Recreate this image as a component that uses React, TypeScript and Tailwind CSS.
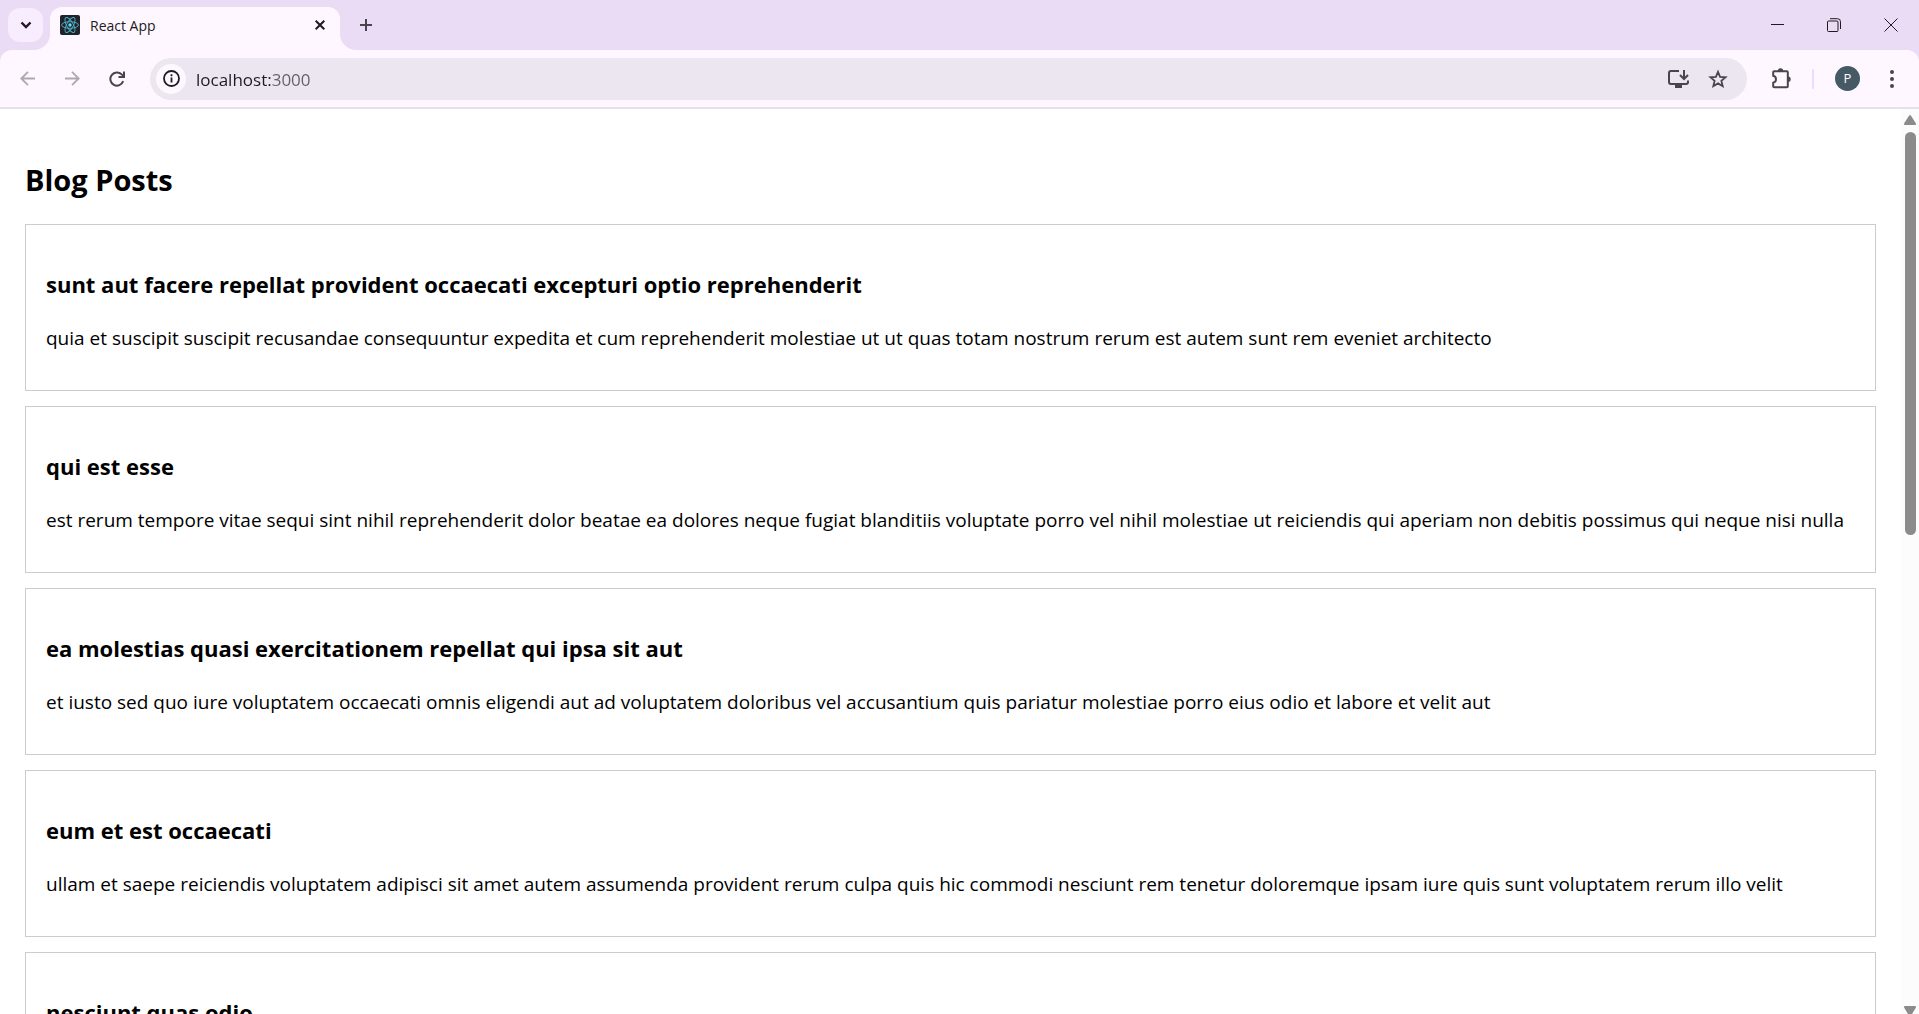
import React from "react";

const CENTERED = "flex shrink-0 items-center justify-center";

const posts: { title: string; body?: string }[] = [
  {
    title: "sunt aut facere repellat provident occaecati excepturi optio reprehenderit",
    body: "quia et suscipit suscipit recusandae consequuntur expedita et cum reprehenderit molestiae ut ut quas totam nostrum rerum est autem sunt rem eveniet architecto",
  },
  {
    title: "qui est esse",
    body: "est rerum tempore vitae sequi sint nihil reprehenderit dolor beatae ea dolores neque fugiat blanditiis voluptate porro vel nihil molestiae ut reiciendis qui aperiam non debitis possimus qui neque nisi nulla",
  },
  {
    title: "ea molestias quasi exercitationem repellat qui ipsa sit aut",
    body: "et iusto sed quo iure voluptatem occaecati omnis eligendi aut ad voluptatem doloribus vel accusantium quis pariatur molestiae porro eius odio et labore et velit aut",
  },
  {
    title: "eum et est occaecati",
    body: "ullam et saepe reiciendis voluptatem adipisci sit amet autem assumenda provident rerum culpa quis hic commodi nesciunt rem tenetur doloremque ipsam iure quis sunt voluptatem rerum illo velit",
  },
  { title: "nesciunt quas odio" },
];

function ReactLogo() {
  return (
    <svg width="20" height="20" viewBox="0 0 20 20" fill="none" aria-hidden="true">
      <rect width="20" height="20" rx="2" fill="#20232a" />
      <g stroke="#4fb3cc" strokeWidth="0.9">
        <ellipse cx="10" cy="10" rx="8.4" ry="3.3" />
        <ellipse cx="10" cy="10" rx="8.4" ry="3.3" transform="rotate(60 10 10)" />
        <ellipse cx="10" cy="10" rx="8.4" ry="3.3" transform="rotate(120 10 10)" />
      </g>
      <circle cx="10" cy="10" r="1.7" fill="#61dafb" />
    </svg>
  );
}

function TabStrip() {
  return (
    <header className="flex h-[50px] shrink-0 items-start bg-[#eadcf5]">
      <button aria-label="Search tabs" className={`${CENTERED} ml-2 mt-2 h-[34px] w-[35px] rounded-xl bg-[#f8ecff]`}>
        <svg width="12" height="8" viewBox="0 0 12 8" fill="none" stroke="#1d1b20" strokeWidth="2.4">
          <path d="M1.500 1.500 6 6l4.500-4.500" />
        </svg>
      </button>
      <div className="relative ml-[7px] mt-[7px] flex h-[43px] w-[290px] items-center rounded-t-xl bg-[#fef7ff] px-[10px] pb-[7px]">
        <svg className="absolute -left-4 bottom-0" width="16" height="16" viewBox="0 0 16 16" fill="#fef7ff">
          <path d="M16 0v16H0A16 16 0 0 0 16 0Z" />
        </svg>
        <svg className="absolute -right-4 bottom-0" width="16" height="16" viewBox="0 0 16 16" fill="#fef7ff">
          <path d="M0 0v16h16A16 16 0 0 1 0 0Z" />
        </svg>
        <ReactLogo />
        <span className="ml-[10px] flex-1 text-[14px] text-[#1d1b20]">React App</span>
        <button aria-label="Close tab" className={`${CENTERED} h-5 w-5`}>
          <svg width="10" height="10" viewBox="0 0 10 10" fill="none" stroke="#1d1b20" strokeWidth="2">
            <path d="m.7.7 8.600 8.600M9.300.7.7 9.300" />
          </svg>
        </button>
      </div>
      <button aria-label="New tab" className={`${CENTERED} ml-3 mt-[11px] h-7 w-7`}>
        <svg width="12" height="12" viewBox="0 0 12 12" fill="none" stroke="#49454f" strokeWidth="2">
          <path d="M6 0v12M0 6h12" />
        </svg>
      </button>
      <div className="ml-auto flex h-[50px] text-[#1d1b20]">
        <button aria-label="Minimize" className={`${CENTERED} w-[57px]`}>
          <svg width="13" height="13" viewBox="0 0 13 13" stroke="currentColor"><path d="M0 5.500h13" /></svg>
        </button>
        <button aria-label="Restore" className={`${CENTERED} w-[56px]`}>
          <svg width="14" height="14" viewBox="0 0 14 14" fill="none" stroke="currentColor">
            <rect x=".5" y="3" width="10.500" height="10.500" rx="1" />
            <path d="M3 .7h7.500a3 3 0 0 1 3 3V11" />
          </svg>
        </button>
        <button aria-label="Close window" className={`${CENTERED} w-[57px]`}>
          <svg width="14" height="14" viewBox="0 0 14 14" stroke="currentColor"><path d="m.5.5 13 13M13.500.5l-13 13" /></svg>
        </button>
      </div>
    </header>
  );
}

function Toolbar() {
  return (
    <div className="shrink-0 bg-[#eadcf5]">
      <nav className="flex h-[59px] items-center rounded-t-xl border-b-2 border-[#e7e0ec] bg-[#fef7ff]">
        <button aria-label="Back" className={`${CENTERED} ml-[11px] h-8 w-8 text-[#aea9b1]`}>
          <svg width="15" height="15" viewBox="0 0 15 15" fill="none" stroke="currentColor" strokeWidth="1.800"><path d="M15 7.500H1.500M8 .8 1.300 7.500 8 14.200" /></svg>
        </button>
        <button aria-label="Forward" className={`${CENTERED} ml-[13px] h-8 w-8 text-[#aea9b1]`}>
          <svg width="15" height="15" viewBox="0 0 15 15" fill="none" stroke="currentColor" strokeWidth="1.800"><path d="M0 7.500h13.500M7 .8l6.700 6.700L7 14.200" /></svg>
        </button>
        <button aria-label="Reload" className={`${CENTERED} ml-[13px] h-8 w-8 text-[#49454f]`}>
          <svg width="16" height="16" viewBox="0 0 16 16" fill="none" stroke="currentColor" strokeWidth="2"><path d="M14.200 10.200A6.600 6.600 0 1 1 12.700 3.400L15 5.500M15 .5v5.500H9.500" /></svg>
        </button>
        <div className="ml-[17px] flex h-[42px] min-w-0 flex-1 items-center rounded-full bg-[#ece6f0] pl-[6px] pr-[13px]">
          <button aria-label="View site information" className={`${CENTERED} h-[30px] w-[30px] rounded-full bg-[#fef7ff]`}>
            <svg width="17" height="17" viewBox="0 0 17 17" fill="none" stroke="#1d1b20" strokeWidth="1.800">
              <circle cx="8.500" cy="8.500" r="7.500" />
              <path d="M8.500 7.500v5M8.500 4.300v1.900" />
            </svg>
          </button>
          <input
            aria-label="Address"
            defaultValue="localhost:3000"
            className="ml-[10px] mt-[2px] min-w-0 flex-1 bg-transparent bg-[linear-gradient(to_right,#1d1b20_76px,#625d66_76px)] bg-clip-text text-[17px] text-transparent caret-black outline-none"
          />
          <button aria-label="Install" className={`${CENTERED} h-8 w-8`}>
            <svg width="21" height="18" viewBox="0 0 21 18" fill="none" stroke="#49454f" strokeWidth="2">
              <path d="M11 1H3a2 2 0 0 0-2 2v9a2 2 0 0 0 2 2h15a2 2 0 0 0 2-2v-1.500M16 0v8M12 5l4 4 4-4" />
              <path d="M7 16.500h7" strokeWidth="3" />
            </svg>
          </button>
          <button aria-label="Bookmark this tab" className={`${CENTERED} ml-2 h-8 w-8`}>
            <svg width="20" height="20" viewBox="0 0 20 20" fill="none" stroke="#49454f" strokeWidth="1.800">
              <path d="m10 2.800 2.100 5 5.500.5-4.200 3.600 1.300 5.300L10 14.400l-4.700 2.800 1.300-5.300-4.200-3.600 5.500-.5Z" />
            </svg>
          </button>
        </div>
        <button aria-label="Extensions" className={`${CENTERED} ml-[18px] h-8 w-8`}>
          <svg width="21" height="21" viewBox="0 0 21 21" fill="#49454f">
            <path d="M3.200 3.200h12.600a1 1 0 0 1 1 1v14a1 1 0 0 1-1 1H3.200a1 1 0 0 1-1-1v-3.500a3.600 3.600 0 0 0 0-7V4.200a1 1 0 0 1 1-1Z" fill="none" stroke="#49454f" strokeWidth="2" />
            <path d="M6.800 3a2.700 2.700 0 0 1 5.400 0ZM17 8.500a2.700 2.700 0 0 1 0 5.400Z" />
          </svg>
        </button>
        <span className="ml-[15px] h-5 w-[2px] rounded-full bg-[#eaddff]" />
        <button aria-label="Profile" className={`${CENTERED} ml-[21px] h-[25px] w-[25px] rounded-full bg-[#455a64] text-[13px] text-white`}>P</button>
        <button aria-label="Menu" className={`${CENTERED} ml-4 mr-[11px] h-8 w-8`}>
          <svg width="4" height="18" viewBox="0 0 4 18" fill="#49454f"><circle cx="2" cy="2" r="2" /><circle cx="2" cy="9" r="2" /><circle cx="2" cy="16" r="2" /></svg>
        </button>
      </nav>
    </div>
  );
}

function ScrollBar() {
  return (
    <div className="flex w-[18px] shrink-0 flex-col items-center bg-[#fcfcfc] pt-[6px]">
      <svg className="shrink-0" width="12" height="10" viewBox="0 0 12 10" fill="#8b8b8b"><path d="M5 .8a1.200 1.200 0 0 1 2 0l4.800 7.500A1.100 1.100 0 0 1 11 10H1a1.100 1.100 0 0 1-.8-1.700Z" /></svg>
      <div className="mt-[7px] w-[11px] flex-[403] rounded-full bg-[#8b8b8b]" />
      <div className="flex-[471]" />
      <svg className="shrink-0" width="12" height="8" viewBox="0 0 12 8" fill="#8b8b8b"><path d="M1 0h10a1.100 1.100 0 0 1 .8 1.700L8 8H4L.2 1.700A1.100 1.100 0 0 1 1 0Z" /></svg>
    </div>
  );
}

export default function App() {
  return (
    <div className="flex h-screen flex-col overflow-hidden bg-white font-['Open_Sans',sans-serif]">
      <TabStrip />
      <Toolbar />
      <div className="flex min-h-0 flex-1">
        <main className="min-w-0 flex-1 overflow-hidden px-[25px] pt-[51px] text-black">
          <h1 className="mb-6 text-[29px] font-bold leading-10">Blog Posts</h1>
          <div className="flex flex-col gap-[15px]">
            {posts.map((p) => (
              <article key={p.title} className="border border-[#cccccc] px-5 pb-[38px] pt-[43px]">
                <h2 className="text-[22px] font-bold leading-8">{p.title}</h2>
                {p.body && <p className="mt-[25px] text-[19px] leading-[27px]">{p.body}</p>}
              </article>
            ))}
          </div>
        </main>
        <ScrollBar />
      </div>
    </div>
  );
}
